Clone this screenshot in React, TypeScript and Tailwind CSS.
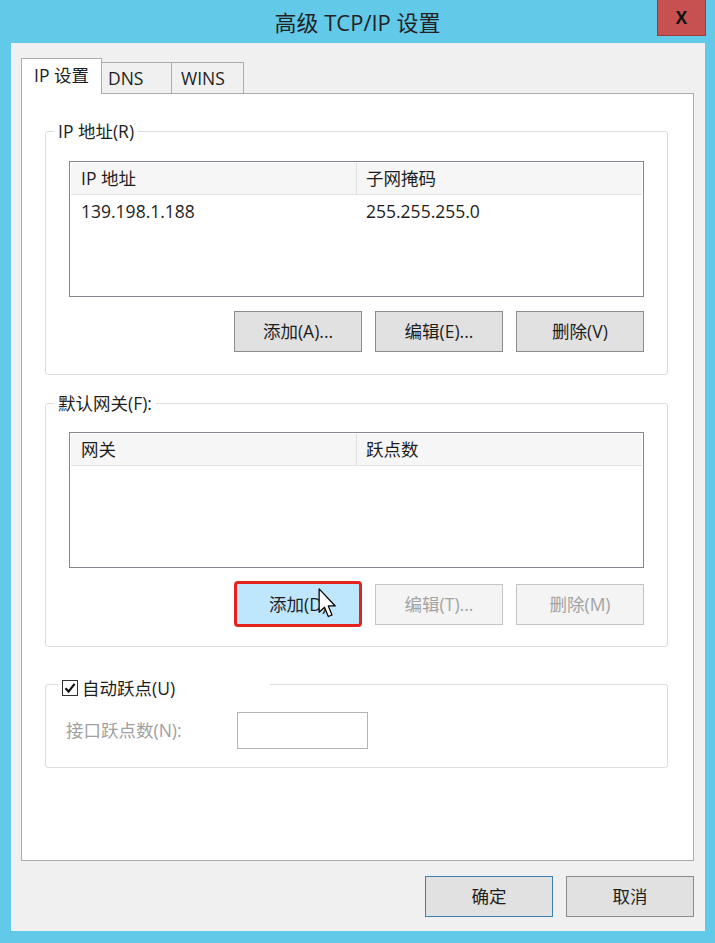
import React from "react";

const Button = ({
  label,
  disabled,
  isDefault,
}: {
  label: string;
  disabled?: boolean;
  isDefault?: boolean;
}) => (
  <div
    className={
      disabled
        ? "flex h-[41px] w-[128px] items-center justify-center border border-[#c4c4c4] bg-[#f4f4f4] text-[#a3a3a3]"
        : isDefault
        ? "flex h-[41px] w-[128px] items-center justify-center border border-[#3c7fb1] bg-[#e1e1e1] text-[#1e1e1e]"
        : "flex h-[41px] w-[128px] items-center justify-center border border-[#8c8c8c] bg-[#e1e1e1] text-[#1e1e1e]"
    }
  >
    {label}
  </div>
);

const ListView = ({ cols, rows }: { cols: [string, string]; rows: [string, string][] }) => (
  <div className="h-[136px] w-full border border-[#828790] bg-white px-px pt-px">
    <div className="flex h-[32px] border-b border-[#e3e3e3] bg-[#f6f6f6] leading-[31px]">
      <div className="w-[286px] border-r border-[#dedede] pl-[10px]">{cols[0]}</div>
      <div className="flex-1 pl-[9px]">{cols[1]}</div>
    </div>
    {rows.map((r, i) => (
      <div key={i} className="flex h-[32px] leading-[32px]">
        <div className="w-[286px] pl-[10px]">{r[0]}</div>
        <div className="flex-1 pl-[9px]">{r[1]}</div>
      </div>
    ))}
  </div>
);

export default function App() {
  return (
    <div className="relative h-[943px] w-[715px] overflow-hidden bg-[#63c9e9] font-['Open_Sans','Noto_Sans_CJK_SC',sans-serif] text-[17.5px] text-[#1e1e1e]">
      {/* title bar */}
      <div className="relative flex h-[43px] items-center justify-center">
        <span className="text-[22px] leading-[28px] text-[#222]">高级 TCP/IP 设置</span>
        <div className="absolute right-[9px] top-0 flex h-[36px] w-[49px] items-center justify-center border border-t-0 border-[#9e3b3b] bg-[#c75050] text-[17px] font-bold text-[#111]">
          X
        </div>
      </div>

      {/* client area */}
      <div className="ml-[11px] h-[888px] w-[694px] bg-[#f0f0f0] pl-[10px] pt-[15px]">
        {/* tabs */}
        <div className="relative z-10 -mb-px flex h-[36px] items-end">
          <div className="flex h-[36px] w-[81px] items-start justify-center border border-b-0 border-[#acacac] bg-white pt-[4px] leading-[24px]">
            IP 设置
          </div>
          <div className="mb-px flex h-[31px] w-[70px] items-center border border-b-0 border-l-0 border-[#acacac] bg-[#f0f0f0] pl-[6px]">
            DNS
          </div>
          <div className="mb-px flex h-[31px] w-[72px] items-center border border-b-0 border-l-0 border-[#acacac] bg-[#f0f0f0] pl-[9px]">
            WINS
          </div>
        </div>

        {/* tab panel */}
        <div className="h-[768px] w-[673px] border border-[#acacac] bg-white pl-[23px] pt-[26px]">
          {/* IP addresses */}
          <fieldset className="w-[623px] rounded-[3px] border border-[#dcdcdc] p-0">
            <legend className="ml-[8px] px-[4px] leading-[22px]">IP 地址(R)</legend>
            <div className="px-[23px] pb-[22px] pt-[19px]">
              <ListView cols={["IP 地址", "子网掩码"]} rows={[["139.198.1.188", "255.255.255.0"]]} />
              <div className="mt-[14px] flex justify-end gap-[13px]">
                <Button label="添加(A)..." />
                <Button label="编辑(E)..." />
                <Button label="删除(V)" />
              </div>
            </div>
          </fieldset>

          {/* default gateways */}
          <fieldset className="mt-[17px] w-[623px] rounded-[3px] border border-[#dcdcdc] p-0">
            <legend className="ml-[8px] px-[4px] leading-[22px]">默认网关(F):</legend>
            <div className="px-[23px] pb-[19px] pt-[18px]">
              <ListView cols={["网关", "跃点数"]} rows={[]} />
              <div className="mt-[13px] flex items-center justify-end gap-[13px]">
                <div className="flex h-[46px] w-[128px] items-center justify-center rounded-[4px] border-[3px] border-[#e5231d] bg-[#bee6fd] text-[#1e1e1e]">
                  添加(D)
                </div>
                <Button label="编辑(T)..." disabled />
                <Button label="删除(M)" disabled />
              </div>
            </div>
          </fieldset>

          {/* metric */}
          <fieldset className="mt-[22px] w-[623px] rounded-[3px] border border-[#dcdcdc] p-0">
            <legend className="ml-[12px] w-[212px] pl-[4px] pt-[8px]">
              <div className="flex h-[22px] items-center gap-[4px]">
                <span className="flex h-[16px] w-[16px] items-center justify-center border border-[#333] bg-white">
                  <svg width="12" height="12" viewBox="0 0 12 12">
                    <path d="M1.5 6.2 L4.6 9.6 L10.6 1.8" fill="none" stroke="#111" strokeWidth="2.2" />
                  </svg>
                </span>
                <span className="leading-[22px]">自动跃点(U)</span>
              </div>
            </legend>
            <div className="flex items-center pb-[18px] pl-[20px] pt-[13px]">
              <span className="w-[171px] text-[#a0a0a0]">接口跃点数(N):</span>
              <div className="h-[37px] w-[131px] border border-[#b4b4b4] bg-white" />
            </div>
          </fieldset>
        </div>

        {/* dialog buttons */}
        <div className="mt-[15px] flex w-[673px] justify-end gap-[13px]">
          <Button label="确定" isDefault />
          <Button label="取消" />
        </div>
      </div>

      {/* mouse pointer */}
      <svg
        className="absolute left-[318px] top-[588px]"
        width="19"
        height="31"
        viewBox="0 0 12 20"
      >
        <path
          d="M0.6 0.6 L0.6 15.6 L4.1 12.4 L6.5 18.4 L8.9 17.4 L6.5 11.6 L11 11.6 Z"
          fill="white"
          stroke="black"
          strokeWidth="0.8"
          strokeLinejoin="round"
        />
      </svg>
    </div>
  );
}
